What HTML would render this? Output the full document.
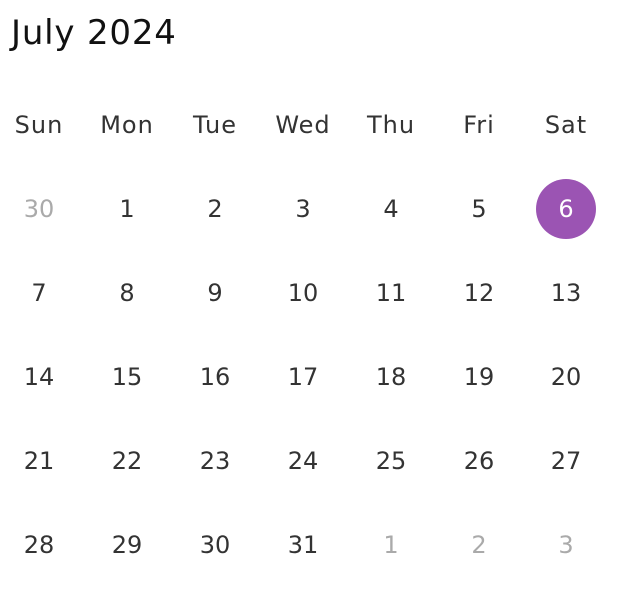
<!DOCTYPE html>
<html><head><meta charset="utf-8"><style>
html,body{margin:0;padding:0;background:#fff;width:620px;height:606px;overflow:hidden;font-family:"DejaVu Sans","Liberation Sans",sans-serif;}
.t{position:absolute;left:11px;top:13px;font-size:34px;color:#111;letter-spacing:0.8px;}
.c{position:absolute;width:80px;height:60px;line-height:60px;text-align:center;font-size:24px;color:#333;margin-left:-40px;margin-top:-30px;}
.h{font-size:24px;color:#333;letter-spacing:1px;}
.g{color:#aaa;}
.s{background:#9b54b3;color:#fff;border-radius:50%;width:60px;margin-left:-30px;}
</style></head><body>
<div class="t">July 2024</div>
<div id="cal"></div>
<script>
var cols=[39,127,215,303,391,479,566],rows=[125,209,293,377,461,545];
var hd=["Sun","Mon","Tue","Wed","Thu","Fri","Sat"];
var d=[["30",1,2,3,4,5,6],[7,8,9,10,11,12,13],[14,15,16,17,18,19,20],[21,22,23,24,25,26,27],[28,29,30,31,"1","2","3"]];
var h="";
for(var i=0;i<7;i++)h+='<div class="c h" style="left:'+cols[i]+'px;top:'+rows[0]+'px">'+hd[i]+'</div>';
for(var r=0;r<5;r++)for(var i=0;i<7;i++){var v=d[r][i];var cl="c";if(typeof v=="string")cl+=" g";if(r==0&&i==6)cl+=" s";
h+='<div class="'+cl+'" style="left:'+cols[i]+'px;top:'+rows[r+1]+'px">'+v+'</div>';}
document.getElementById("cal").innerHTML=h;
</script>
</body></html>
